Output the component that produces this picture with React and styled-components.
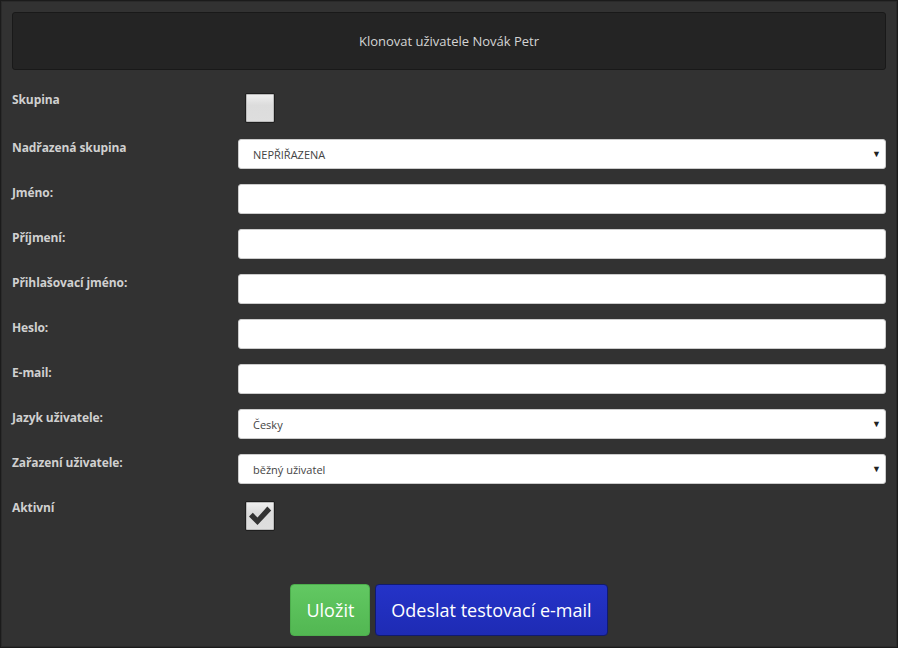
import React, {useState} from 'react';
import styled, {createGlobalStyle} from 'styled-components';

const GlobalStyle = createGlobalStyle`
  html, body {
    margin: 0;
    padding: 0;
    background: #323232;
  }
  * {
    box-sizing: border-box;
  }
`;

const rows = [
  {label: 'Nadřazená skupina', type: 'select', value: 'NEPŘIŘAZENA'},
  {label: 'Jméno:', type: 'text'},
  {label: 'Příjmení:', type: 'text'},
  {label: 'Přihlašovací jméno:', type: 'text'},
  {label: 'Heslo:', type: 'password'},
  {label: 'E-mail:', type: 'text'},
  {label: 'Jazyk uživatele:', type: 'select', value: 'Česky'},
  {label: 'Zařazení uživatele:', type: 'select', value: 'běžný uživatel'},
];

const Check = ({checked, onToggle}) => (
  <CheckBox type="button" onClick={onToggle}>
    {checked && (
      <svg width="24" height="22" viewBox="0 0 24 22">
        <path d="M1 11.5 L4.8 7.7 L9.5 12.4 L19.3 1.6 L23.2 5.4 L9.5 20 Z" fill="#333" />
      </svg>
    )}
  </CheckBox>
);

const App = () => {
  const [group, setGroup] = useState(false);
  const [active, setActive] = useState(true);

  return (
    <Frame>
      <GlobalStyle />
      <Header>Klonovat uživatele Novák Petr</Header>
      <Form>
        <Row>
          <Label>Skupina</Label>
          <Check checked={group} onToggle={() => setGroup(!group)} />
        </Row>
        {rows.map((r) => (
          <Row key={r.label}>
            <Label>{r.label}</Label>
            {r.type === 'select' ? (
              <SelectWrap>
                <Select defaultValue={r.value}>
                  <option>{r.value}</option>
                </Select>
                <Caret>▼</Caret>
              </SelectWrap>
            ) : (
              <Input type={r.type} />
            )}
          </Row>
        ))}
        <Row>
          <Label>Aktivní</Label>
          <Check checked={active} onToggle={() => setActive(!active)} />
        </Row>
      </Form>
      <Buttons>
        <Button $variant="green">Uložit</Button>
        <Button $variant="blue">Odeslat testovací e-mail</Button>
      </Buttons>
    </Frame>
  );
};

export default App;

const Frame = styled.div`
  width: 898px;
  height: 648px;
  border: 1px solid #1b1b1b;
  box-shadow: inset 0 0 0 1px #2a2a2a;
  background: #323232;
  padding: 11px 11px 0;
  font-family: 'Open Sans', 'Liberation Sans', sans-serif;
`;

const Header = styled.div`
  height: 58px;
  background: #242424;
  border: 1px solid #191919;
  border-radius: 3px;
  display: flex;
  align-items: center;
  justify-content: center;
  color: #d4d4d4;
  font-size: 13px;
`;

const Form = styled.div`
  display: flex;
  flex-direction: column;
  gap: 15px;
  margin-top: 21px;
`;

const Row = styled.div`
  display: grid;
  grid-template-columns: 226px 1fr;
  align-items: start;
`;

const Label = styled.div`
  color: #d0d0d0;
  font-size: 12px;
  font-weight: 700;
  line-height: 18px;
  letter-spacing: -0.1px;
`;

const CheckBox = styled.button`
  width: 30px;
  height: 30px;
  margin: 2px 0 1px 7px;
  padding: 0;
  border: 1px solid #1e1e1e;
  border-radius: 2px;
  background: linear-gradient(#f0f0f0, #dcdcdc 40%, #dedede);
  box-shadow: inset 0 0 0 1px #bbb;
  display: flex;
  align-items: center;
  justify-content: center;
  cursor: pointer;
`;

const Input = styled.input`
  height: 30px;
  width: 100%;
  border: 1px solid #ccc;
  border-radius: 3px;
  background: #fff;
  padding: 0 14px;
  font-family: inherit;
  font-size: 11px;
  outline: none;
`;

const SelectWrap = styled.div`
  position: relative;
  height: 30px;
`;

const Select = styled.select`
  appearance: none;
  -webkit-appearance: none;
  height: 30px;
  width: 100%;
  border: 1px solid #ccc;
  border-radius: 3px;
  background: #fff;
  padding: 0 14px;
  color: #444;
  font-family: inherit;
  font-size: 11px;
  outline: none;
`;

const Caret = styled.span`
  position: absolute;
  right: 5px;
  top: 8px;
  font-size: 9px;
  color: #222;
  pointer-events: none;
`;

const Buttons = styled.div`
  display: flex;
  justify-content: center;
  gap: 5px;
  margin-top: 52px;
`;

const Button = styled.button`
  height: 52px;
  padding: 0 15px;
  border-radius: 4px;
  color: #fff;
  font-family: 'Open Sans', Lato, sans-serif;
  font-size: 18px;
  font-weight: 400;
  cursor: pointer;
  border: 1px solid ${({$variant}) => ($variant === 'green' ? '#4cae4c' : '#101a70')};
  background: ${({$variant}) =>
    $variant === 'green'
      ? 'linear-gradient(#62c862, #52b752)'
      : 'linear-gradient(#2433c8, #1e2bb4)'};
`;
